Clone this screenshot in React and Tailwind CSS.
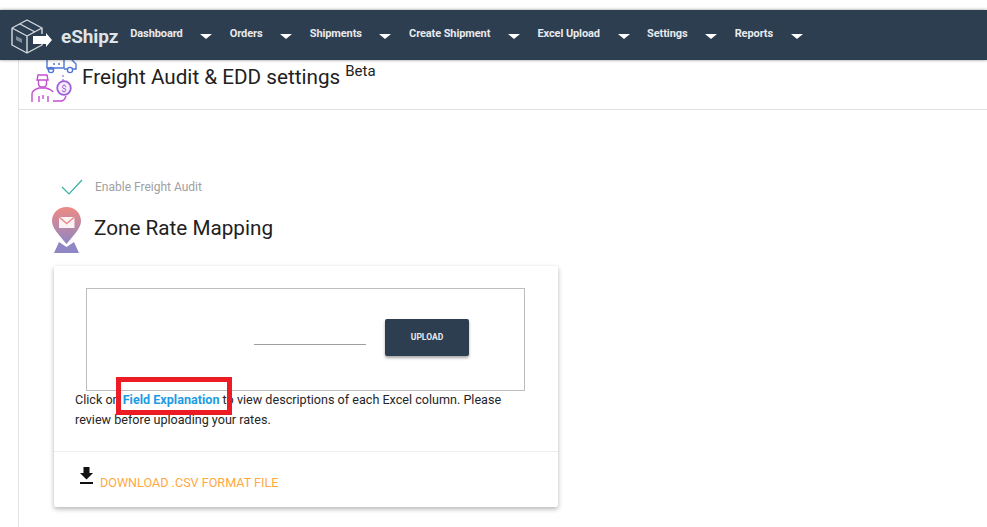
const nav = ["Dashboard", "Orders", "Shipments", "Create Shipment", "Excel Upload", "Settings", "Reports"];

function Logo() {
  return (
    <svg width="54" height="40" viewBox="0 0 54 40" fill="none" className="shrink-0">
      <path d="M1 13 L16 5 L31 13 V19 M1 13 V30 L16 38 L31 30 V28 M1 13 L16 21 L31 13 M16 21 V38 M9 9 L24 17" stroke="#d5d9de" strokeWidth="1.4" strokeLinejoin="round" />
      <path d="M5 21 L11 24 V28 L5 25 Z" fill="#7f8b99" />
      <path d="M22 21 H35 V18 L41 25 L35 32 V29 H22 Z" fill="#ffffff" />
    </svg>
  );
}

function FreightIcon() {
  return (
    <svg width="48" height="46" viewBox="0 0 48 46" fill="none" className="shrink-0">
      <g stroke="#4f76d8" strokeWidth="1.4">
        <path d="M16 0 V12 H33 V0" />
        <path d="M33 3 H40 L45 8 V13 H42 M33 13 H36 M22 13 H16" />
        <circle cx="20" cy="14" r="2.6" />
        <circle cx="39" cy="14" r="2.6" />
        <path d="M22 8 H24 M27 8 H29" />
      </g>
      <path d="M32 19 V26" stroke="#8f86d8" strokeWidth="1.3" strokeDasharray="2 2" />
      <g stroke="#c24fd0" strokeWidth="1.4">
        <path d="M7 19 H16 L17 24 H6 Z" />
        <path d="M7.5 24 V28 C7.5 32 15.5 32 15.5 28 V24" />
        <path d="M1 46 V38 C1 34 5 33 8 32 H15 C18 33 21 34 22 36 M8 40 V46 M12 39 V43 M17 40 V46" />
        <path d="M22 45 H30 C33 45 34 43 35 40" />
      </g>
      <circle cx="33" cy="32" r="6.8" stroke="#a05fd8" strokeWidth="1.8" fill="#f7f0fc" />
      <text x="33" y="35.5" textAnchor="middle" fontSize="9.5" fill="#a05fd0" fontFamily="Roboto, sans-serif">$</text>
    </svg>
  );
}

function PinIcon() {
  return (
    <svg width="29" height="46" viewBox="0 0 29 46" className="shrink-0">
      <defs>
        <linearGradient id="pinGrad" x1="0" y1="0" x2="0" y2="1">
          <stop offset="0" stopColor="#ee8a82" />
          <stop offset="1" stopColor="#8f86c4" />
        </linearGradient>
      </defs>
      <path d="M14.5 0 C22.5 0 29 6 29 14 C29 21 22 28 14.5 37 C7 28 0 21 0 14 C0 6 6.5 0 14.5 0 Z" fill="url(#pinGrad)" />
      <path d="M2 46 L7 35 L14.5 40 L22 35 L27 46 Z" fill="#8f86c4" />
      <rect x="7" y="10" width="15.5" height="11" fill="#ffffff" opacity="0.9" />
      <path d="M7 10 L14.75 16.5 L22.5 10" fill="none" stroke="#e98b88" strokeWidth="1.6" />
    </svg>
  );
}

export default function App() {
  return (
    <div className="h-[527px] w-[987px] overflow-hidden bg-white pt-[10px] font-['Roboto',sans-serif] text-[#212121]">
      <header className="relative z-10 flex h-[50px] items-center bg-[#2d3e50] pl-[11px] shadow-[0_0_3px_rgba(0,0,0,0.45)]">
        <Logo />
        <span className="ml-[-4px] mr-[12px] mt-[3px] text-[19px] font-bold leading-none tracking-[-0.1px] text-[#dfe3e7]">eShipz</span>
        <nav className="-mt-[1px] flex items-center">
          {nav.map((item) => (
            <div key={item} className="flex items-center">
              <span className="text-[11px] font-bold tracking-[-0.1px] text-[#e8eaed]">{item}</span>
              <span className="mx-[17.6px] mt-[3px] h-0 w-0 border-x-[6px] border-t-[5px] border-x-transparent border-t-white" />
            </div>
          ))}
        </nav>
      </header>

      <main className="ml-[18px] h-[467px] border-l border-[#e3e3e3]">
        <div className="flex h-[50px] items-start border-b border-[#e0e0e0] pl-[12px]">
          <div className="-mt-[4px]"><FreightIcon /></div>
          <h1 className="ml-[3px] mt-[4px] flex items-start text-[20.7px] font-normal leading-[26px]">
            Freight Audit &amp; EDD settings
            <span className="ml-[5px] mt-[-3px] text-[15px] leading-[20px]">Beta</span>
          </h1>
        </div>

        <div className="ml-[35px] w-[504px]">
          <div className="mt-[68px] flex h-[18px] items-center">
            <svg width="22" height="16" viewBox="0 0 22 16" fill="none" className="ml-[7px]">
              <path d="M1 8 L8 15 L21 1" stroke="#35b0a4" strokeWidth="1.2" />
            </svg>
            <span className="ml-[12px] text-[12px] text-[#a0a0a3]">Enable Freight Audit</span>
          </div>

          <div className="mt-[11px] flex h-[46px] items-center">
            <div className="-ml-[2px]"><PinIcon /></div>
            <h2 className="ml-[13px] -mt-[3px] text-[20.7px] font-normal">Zone Rate Mapping</h2>
          </div>

          <section className="relative mt-[13px] h-[241px] rounded-[2px] bg-white shadow-[0_2px_5px_rgba(0,0,0,0.3)]">
            <div className="pl-[32px] pt-[22px]">
              <div className="flex h-[103px] w-[439px] items-center border border-[#bdbdbd] pl-[167px]">
                <div className="mt-[9px] h-px w-[112px] bg-[#9e9e9e]" />
                <button className="ml-[19px] -mt-[4px] h-[37px] w-[84px] rounded-[2px] bg-[#2d3e50] text-[8.5px] font-bold text-[#e8eaed] shadow-[0_2px_3px_rgba(0,0,0,0.35)]">UPLOAD</button>
              </div>
            </div>
            <p className="ml-[21px] mt-[-1px] h-[61px] w-[450px] text-[12.6px] leading-[20px] text-[#262626]">
              Click on <span className="font-bold text-[#1d9be3]">Field Explanation</span> to view descriptions of each Excel column. Please review before uploading your rates.
            </p>
            <div className="flex h-[55px] items-start border-t border-[#eeeeee] pl-[26px]">
              <svg width="13" height="18" viewBox="0 0 13 18" className="mt-[15px] shrink-0">
                <path d="M3.5 0 H9.5 V6 H13 L6.5 12.5 L0 6 H3.5 Z" fill="#111111" />
                <rect x="0" y="15" width="13" height="2" fill="#111111" />
              </svg>
              <span className="ml-[7px] mt-[23px] text-[12.6px] leading-[16px] text-[#ffa93f]">DOWNLOAD .CSV FORMAT FILE</span>
            </div>
            <div className="absolute left-[62px] top-[111px] h-[38px] w-[116px] border-[5px] border-[#ed1c24]" />
          </section>
        </div>
      </main>
    </div>
  );
}
